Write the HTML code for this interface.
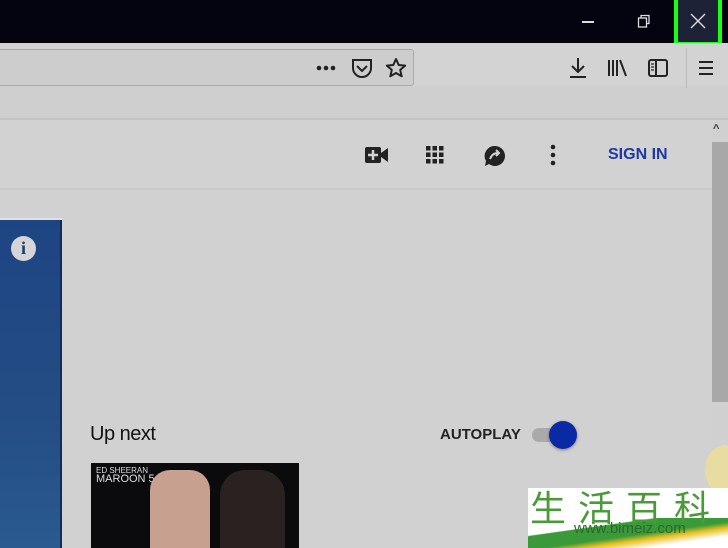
<!DOCTYPE html>
<html><head><meta charset="utf-8"><style>
*{margin:0;padding:0;box-sizing:border-box}
html,body{width:728px;height:548px;overflow:hidden}
body{background:#d1d1d1;font-family:"Liberation Sans",sans-serif;position:relative}
.a{position:absolute;white-space:nowrap}
</style></head><body>
<div class="a" style="left:0;top:0;width:728px;height:43px;background:#03040f"></div>
<div class="a" style="left:582px;top:21px;width:12px;height:1.5px;background:#ddd"></div>
<svg class="a" style="left:637px;top:14px" width="14" height="14"><rect x="1.5" y="4" width="8" height="9" fill="none" stroke="#ddd" stroke-width="1.3"/><path d="M4 4V1.5h8v8H9.5" fill="none" stroke="#ddd" stroke-width="1.3"/></svg>
<div class="a" style="left:674px;top:0;width:48px;height:47px;background:#18ff18"></div>
<div class="a" style="left:678px;top:0;width:40px;height:42px;background:#1e2236"></div>
<svg class="a" style="left:690px;top:13px" width="16" height="16"><path d="M1 1L15 15M15 1L1 15" stroke="#ddd" stroke-width="1.4"/></svg>
<div class="a" style="left:0;top:43px;width:728px;height:77px;background:#d3d3d3"></div>
<div class="a" style="left:0;top:86px;width:728px;height:33px;background:#cfcfcf"></div>
<div class="a" style="left:0;top:118px;width:728px;height:2px;background:#c4c4c4"></div>
<div class="a" style="left:-4px;top:49px;width:418px;height:37px;background:#cdcdcd;border:1px solid #aaa;border-radius:3px"></div>
<svg class="a" style="left:316px;top:64px" width="22" height="8"><circle cx="3" cy="4" r="2.3" fill="#222"/><circle cx="10" cy="4" r="2.3" fill="#222"/><circle cx="17" cy="4" r="2.3" fill="#222"/></svg>
<svg class="a" style="left:351px;top:58px" width="22" height="20"><path d="M2 2h18v8a9 9 0 0 1-18 0z" fill="none" stroke="#222" stroke-width="2"/><path d="M6 8l5 5 5-5" fill="none" stroke="#222" stroke-width="2"/></svg>
<svg class="a" style="left:385px;top:57px" width="22" height="22"><path d="M11 2l2.7 6 6.5.6-5 4.3 1.5 6.4L11 16l-5.7 3.3 1.5-6.4-5-4.3 6.5-.6z" fill="none" stroke="#222" stroke-width="2" stroke-linejoin="round"/></svg>
<svg class="a" style="left:568px;top:56px" width="20" height="24"><path d="M10 2v14M4 10l6 6 6-6" fill="none" stroke="#222" stroke-width="2"/><rect x="2" y="20" width="16" height="2" fill="#222"/></svg>
<svg class="a" style="left:607px;top:58px" width="22" height="20"><path d="M2 2v16M6 2v16M10 2v16M13 2l6 16" stroke="#222" stroke-width="2"/></svg>
<svg class="a" style="left:647px;top:58px" width="22" height="20"><rect x="2" y="2" width="18" height="16" rx="2" fill="none" stroke="#222" stroke-width="2"/><path d="M9 2v16" stroke="#222" stroke-width="2"/><path d="M4 6h3M4 9h3M4 12h3" stroke="#222" stroke-width="1.2"/></svg>
<div class="a" style="left:686px;top:48px;width:1px;height:40px;background:#bbb"></div>
<svg class="a" style="left:697px;top:59px" width="18" height="18"><path d="M2 3h14M2 9h14M2 15h14" stroke="#222" stroke-width="2"/></svg>
<div class="a" style="left:0;top:120px;width:712px;height:70px;background:#d2d2d2;border-bottom:2px solid #c8c8c8"></div>
<div class="a" style="left:712px;top:120px;width:16px;height:428px;background:#d0d0d0"></div>
<div class="a" style="left:712px;top:142px;width:16px;height:260px;background:#a8a8a8"></div>
<div class="a" style="left:713px;top:123px;font-size:11px;font-weight:bold;color:#333">^</div>
<svg class="a" style="left:364px;top:144px" width="26" height="22"><rect x="1" y="3" width="16" height="16" rx="2" fill="#222"/><path d="M17 9l7-5v14l-7-5z" fill="#222"/><path d="M9 6v10M4 11h10" stroke="#d2d2d2" stroke-width="2.5"/></svg>
<svg class="a" style="left:424px;top:144px" width="22" height="22"><g fill="#222"><rect x="2" y="2" width="4.5" height="4.5"/><rect x="8.5" y="2" width="4.5" height="4.5"/><rect x="15" y="2" width="4.5" height="4.5"/><rect x="2" y="8.5" width="4.5" height="4.5"/><rect x="8.5" y="8.5" width="4.5" height="4.5"/><rect x="15" y="8.5" width="4.5" height="4.5"/><rect x="2" y="15" width="4.5" height="4.5"/><rect x="8.5" y="15" width="4.5" height="4.5"/><rect x="15" y="15" width="4.5" height="4.5"/></g></svg>
<svg class="a" style="left:483px;top:144px" width="24" height="24"><path d="M12 2a10 10 0 1 1-6 18l-4 2 1-5A10 10 0 0 1 12 2z" fill="#222"/><path d="M7 15c2-5 5-6 8-6M13 6l3 3-3 3" fill="none" stroke="#d2d2d2" stroke-width="2"/></svg>
<svg class="a" style="left:549px;top:144px" width="8" height="22"><circle cx="4" cy="3" r="2.3" fill="#222"/><circle cx="4" cy="11" r="2.3" fill="#222"/><circle cx="4" cy="19" r="2.3" fill="#222"/></svg>
<div class="a" style="left:608px;top:146px;font-size:16px;font-weight:bold;color:#1a3aa0">SIGN IN</div>
<div class="a" style="left:0;top:219px;width:62px;height:329px;background:linear-gradient(#1e4583,#244d85 60%,#2a5a90);border-right:2px solid #152a55"></div>
<div class="a" style="left:0;top:218px;width:62px;height:2px;background:#e0e0e0"></div>
<div class="a" style="left:11px;top:236px;width:25px;height:25px;border-radius:50%;background:#d5d5d8;color:#1f3a6d;font:bold 18px 'Liberation Serif',serif;text-align:center;line-height:25px">i</div>
<div class="a" style="left:90px;top:423px;font-size:20px;color:#111;letter-spacing:-0.5px">Up next</div>
<div class="a" style="left:440px;top:426px;font-size:15px;font-weight:bold;color:#222">AUTOPLAY</div>
<div class="a" style="left:532px;top:428px;width:40px;height:14px;border-radius:7px;background:#aaa"></div>
<div class="a" style="left:549px;top:421px;width:28px;height:28px;border-radius:50%;background:#0a2aa5;box-shadow:0 1px 3px rgba(0,0,0,.4)"></div>
<div class="a" style="left:91px;top:463px;width:208px;height:85px;background:#0b0b0e"></div>
<div class="a" style="left:96px;top:466px;font-size:8px;color:#ddd;line-height:9px">ED SHEERAN<br><span style="font-size:11px">MAROON 5</span></div>
<div class="a" style="left:150px;top:470px;width:60px;height:78px;background:#c8a090;border-radius:20px 20px 0 0"></div>
<div class="a" style="left:220px;top:470px;width:65px;height:78px;background:#2a2220;border-radius:25px 25px 0 0"></div>
<div class="a" style="left:705px;top:445px;width:40px;height:50px;border-radius:50%;background:#e8dca0"></div>
<div class="a" style="left:528px;top:488px;width:200px;height:60px;background:#fff;overflow:hidden">
<div class="a" style="left:0;top:30px;width:200px;height:30px;background:linear-gradient(172deg,#fff 30%,#3a9a3a 32%,#3a9a3a 55%,#e8c020 65%,#fff 80%)"></div>
<div class="a" style="left:2px;top:-4px;font:36px/44px 'Noto Sans CJK SC',sans-serif;color:#4a9a3a;letter-spacing:12px">生活百科</div>
<div class="a" style="left:46px;top:32px;font-size:15px;color:#2a6a2a">www.bimeiz.com</div>
</div>
</body></html>
